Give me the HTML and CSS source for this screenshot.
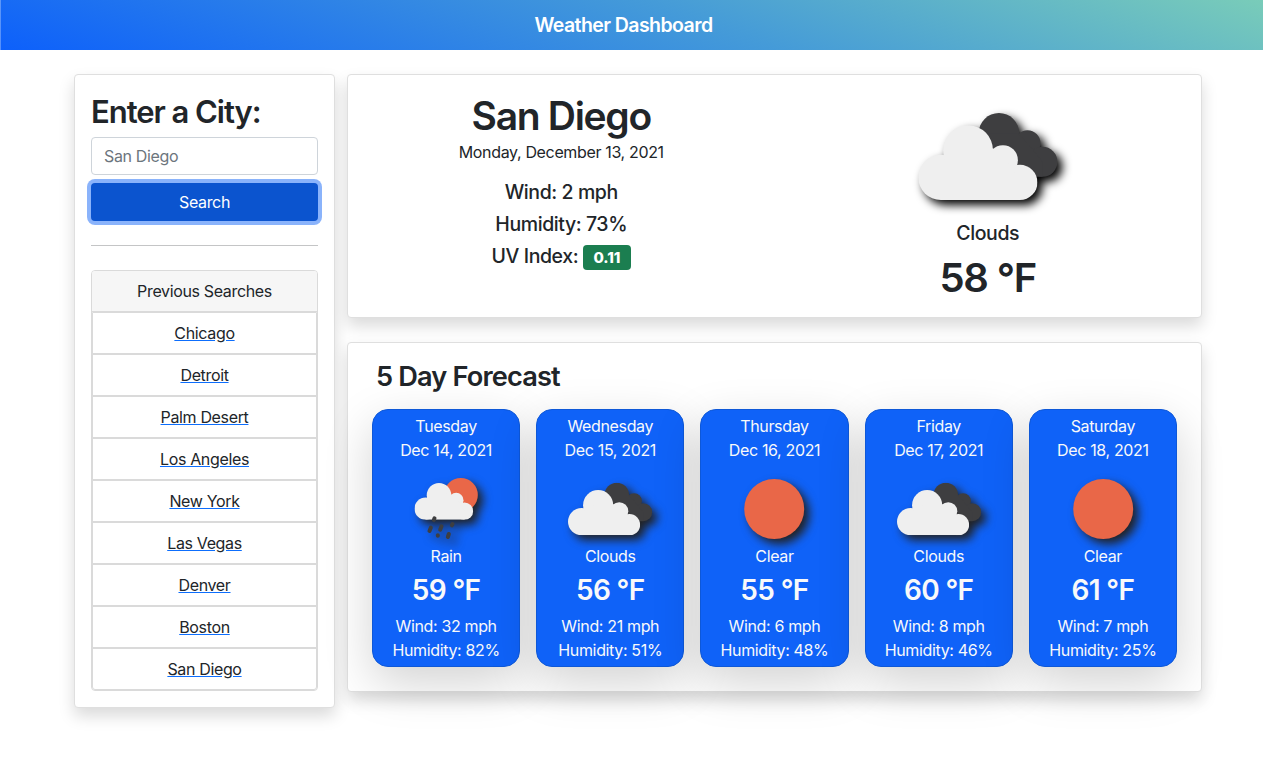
FILE: index.html
```html
<!DOCTYPE html>
<html lang="en">
<head>
<meta charset="utf-8">
<title>Weather Dashboard</title>
<link rel="stylesheet" href="styles.css">
</head>
<body>
<svg class="defs" aria-hidden="true">
  <symbol id="cloud" viewBox="0 0 359 225">
    <circle cx="68" cy="157" r="68"/><circle cx="150" cy="75" r="75"/><circle cx="255" cy="105" r="45"/><circle cx="306" cy="172" r="53"/>
    <path d="M68 225V110L150 60L225 70L270 110L306 172V225Z"/>
  </symbol>
  <symbol id="clouds" viewBox="0 0 420 262">
    <g fill="#3e3e40"><circle cx="243" cy="61" r="61"/><circle cx="329" cy="91" r="39"/><circle cx="374" cy="147" r="45"/><path d="M200 61H300L329 91L374 147V192H220Z"/></g>
    <use href="#cloud" x="0" y="37" width="359" height="225" fill="#efefef"/>
  </symbol>
</svg>
<header class="header"><h1 class="header-title">Weather Dashboard</h1></header>
<main class="container">
  <aside class="card sidebar">
    <h2 class="prompt">Enter a City:</h2>
    <input class="city-input" type="text" placeholder="San Diego">
    <button class="search-btn" type="button">Search</button>
    <hr class="divider">
    <div class="history">
      <div class="history-title">Previous Searches</div>
      <ul class="history-list">
        <li><a href="#">Chicago</a></li>
        <li><a href="#">Detroit</a></li>
        <li><a href="#">Palm Desert</a></li>
        <li><a href="#">Los Angeles</a></li>
        <li><a href="#">New York</a></li>
        <li><a href="#">Las Vegas</a></li>
        <li><a href="#">Denver</a></li>
        <li><a href="#">Boston</a></li>
        <li><a href="#">San Diego</a></li>
      </ul>
    </div>
  </aside>
  <div class="content">
    <section class="card current">
      <div class="current-info">
        <h2 class="city">San Diego</h2>
        <p class="date">Monday, December 13, 2021</p>
        <p class="stat">Wind: 2 mph</p>
        <p class="stat">Humidity: 73%</p>
        <p class="stat">UV Index: <span class="badge">0.11</span></p>
      </div>
      <div class="current-sky">
        <svg class="icon-large" viewBox="0 0 420 262"><use href="#clouds" width="420" height="262"/></svg>
        <p class="sky">Clouds</p>
        <p class="temp-large">58 °F</p>
      </div>
    </section>
    <section class="card forecast">
      <h3 class="forecast-title">5 Day Forecast</h3>
      <div class="days">
        <article class="day">
          <p>Tuesday</p><p>Dec 14, 2021</p>
          <svg class="icon rain" viewBox="0 0 192 183">
            <circle cx="139" cy="51" r="51" fill="#e96748"/>
            <use href="#cloud" x="0" y="15" width="176" height="110.5" fill="#efefef"/>
            <g stroke="#3e3e40" stroke-width="12" stroke-linecap="round"><path d="M58 126L60 121M45 159L49 149M77 155L81 145M112 142L114 138M70 172L70 173M100 177L103 168"/></g>
          </svg>
          <p>Rain</p><p class="temp">59 °F</p><p>Wind: 32 mph</p><p>Humidity: 82%</p>
        </article>
        <article class="day">
          <p>Wednesday</p><p>Dec 15, 2021</p>
          <svg class="icon" viewBox="0 0 420 262"><use href="#clouds" width="420" height="262"/></svg>
          <p>Clouds</p><p class="temp">56 °F</p><p>Wind: 21 mph</p><p>Humidity: 51%</p>
        </article>
        <article class="day">
          <p>Thursday</p><p>Dec 16, 2021</p>
          <svg class="icon sun" viewBox="0 0 60 60"><circle cx="30" cy="30" r="30" fill="#e96748"/></svg>
          <p>Clear</p><p class="temp">55 °F</p><p>Wind: 6 mph</p><p>Humidity: 48%</p>
        </article>
        <article class="day">
          <p>Friday</p><p>Dec 17, 2021</p>
          <svg class="icon" viewBox="0 0 420 262"><use href="#clouds" width="420" height="262"/></svg>
          <p>Clouds</p><p class="temp">60 °F</p><p>Wind: 8 mph</p><p>Humidity: 46%</p>
        </article>
        <article class="day">
          <p>Saturday</p><p>Dec 18, 2021</p>
          <svg class="icon sun" viewBox="0 0 60 60"><circle cx="30" cy="30" r="30" fill="#e96748"/></svg>
          <p>Clear</p><p class="temp">61 °F</p><p>Wind: 7 mph</p><p>Humidity: 25%</p>
        </article>
      </div>
    </section>
  </div>
</main>
</body>
</html>
```
FILE: styles.css
```css
* { box-sizing: border-box; margin: 0; padding: 0; }
body { font: 400 16px/24px Inter, "Liberation Sans", sans-serif; color: #212529; background: #fff; letter-spacing: -0.35px; }
.defs { display: block; width: 0; height: 0; position: absolute; }
.header { height: 50px; padding: 13px 16px 0 0; text-align: center; color: #fff; background: linear-gradient(20deg, #0d60fb, #459bd8 56%, #79ccb9); box-shadow: inset 1px 0 rgba(255,255,255,.3); }
.header-title { font-size: 19.5px; line-height: 24px; font-weight: 600; letter-spacing: -0.56px; }
.container { display: flex; align-items: flex-start; gap: 12px; min-height: 733px; padding: 24px 61px 0 74px; }
.card { background: #fff; border: 1px solid #dfdfdf; border-radius: 4px; box-shadow: 0 8px 16px rgba(0,0,0,.15); }
.sidebar { width: 261px; height: 634px; padding: 16px; }
.prompt { font-size: 31px; line-height: 42px; height: 38px; font-weight: 600; letter-spacing: -1.05px; margin-bottom: 8px; }
.city-input { display: block; width: 100%; height: 38px; padding: 6px 12px; font: inherit; letter-spacing: inherit; border: 1px solid #ced4da; border-radius: 4px; background: #fff; }
.city-input::placeholder { color: #6c757d; opacity: 1; }
.search-btn { display: block; width: 100%; height: 38px; margin-top: 8px; font: inherit; letter-spacing: inherit; color: #fff; background: #0b54cf; border: 0; border-radius: 4px; box-shadow: 0 0 0 4px #8ab3fb; }
.divider { border: 0; height: 1px; background: #c4c5c6; margin: 24px 0; }
.history { border: 1px solid #dadada; border-radius: 4px; text-align: center; }
.history-title { height: 41px; padding: 8px 0; background: #f6f6f6; border-bottom: 1px solid #dadada; border-radius: 3px 3px 0 0; }
.history-list { list-style: none; border: 1px solid #dadada; border-radius: 0 0 3px 3px; }
.history-list li { height: 42px; padding: 8px 0; border-bottom: 2px solid #dadada; }
.history-list li:last-child { height: 40px; border-bottom: 0; }
.history-list a { color: #212529; text-decoration: underline #0d6efd; }
.content { flex: 1; display: flex; flex-direction: column; gap: 24px; }
.current { display: flex; height: 244px; padding: 17px 0 0; text-align: center; }
.current-info, .current-sky { width: 50%; }
.city { font-size: 39px; line-height: 48px; font-weight: 600; letter-spacing: -1.3px; }
.stat, .sky { font-size: 19.5px; line-height: 24px; font-weight: 550; letter-spacing: -0.42px; margin-bottom: 8px; }
.date { margin-bottom: 16px; }
.badge { display: inline-block; width: 48px; height: 25px; font-size: 15px; line-height: 25px; font-weight: 800; letter-spacing: 0; color: #fff; background: #1b7e50; border-radius: 4px; }
.icon-large { display: block; width: 140px; height: 87px; margin: 21px auto 21px; overflow: visible; filter: drop-shadow(5px 5px 5px #000); }
.temp-large { font-size: 40px; line-height: 50px; font-weight: 600; letter-spacing: -1.2px; }
.forecast { height: 350px; padding: 17px 24px 0; }
.forecast-title { font-size: 27.2px; line-height: 34px; font-weight: 600; letter-spacing: -0.85px; margin: 0 0 15px 4px; }
.days { display: grid; grid-template-columns: repeat(5, 1fr); gap: 16px; }
.day { height: 258px; padding: 4px 0; text-align: center; color: #f8f9fa; background: #0f62f8; border: 1px solid #0e58d8; border-radius: 16px; box-shadow: 0 16px 48px rgba(0,0,0,.175); }
.icon { display: block; width: 84.4px; height: 60px; margin: 16.5px auto 5.5px; overflow: visible; filter: drop-shadow(5px 5px 5px #222); }
.rain { width: 64px; height: 61px; margin: 16px auto 5px; transform: translateX(0.5px); }
.temp { font-size: 28px; line-height: 34px; font-weight: 600; letter-spacing: -0.65px; margin: 5px 0 7px; }
```
